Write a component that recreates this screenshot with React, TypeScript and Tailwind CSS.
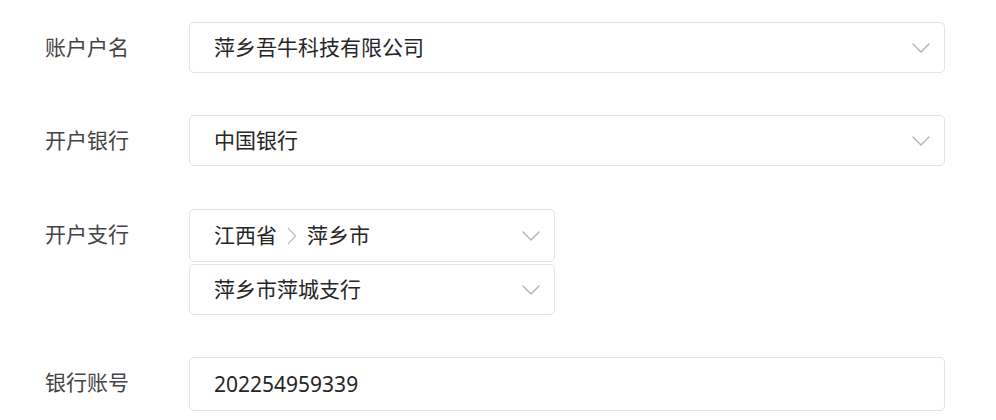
import React from "react";

const Chevron = ({ className = "" }: { className?: string }) => (
  <svg width="18" height="10" viewBox="0 0 18 10" className={className} fill="none">
    <path d="M1 1 L9 9 L17 1" stroke="#b3b3b3" strokeWidth="1.4" strokeLinecap="round" strokeLinejoin="round" />
  </svg>
);

const font = { fontFamily: '"Noto Sans", "Noto Sans CJK SC", sans-serif' };

function Box({ children, chevron = true, w = "w-[756px]", h = "h-[51px]" }: { children: React.ReactNode; chevron?: boolean; w?: string; h?: string }) {
  return (
    <div className={`${w} ${h} flex items-center justify-between border border-[#e3e3e3] rounded-[5px] bg-white pl-[24px] pr-[14px]`}>
      <div className="text-[21px] text-[#262626] leading-none">{children}</div>
      {chevron && <Chevron />}
    </div>
  );
}

function Label({ children }: { children: React.ReactNode }) {
  return (
    <div className="w-[144px] h-[51px] flex items-center text-[21px] text-[#444] leading-none shrink-0">{children}</div>
  );
}

export default function App() {
  return (
    <div className="w-[996px] h-[420px] bg-white overflow-hidden pl-[45px] pt-[22px]" style={font}>
      <div className="flex flex-col">
        <div className="flex">
          <Label>账户户名</Label>
          <Box>萍乡吾牛科技有限公司</Box>
        </div>
        <div className="flex mt-[42px]">
          <Label>开户银行</Label>
          <Box>中国银行</Box>
        </div>
        <div className="flex mt-[43px]">
          <Label>开户支行</Label>
          <div className="flex flex-col gap-[2px]">
            <Box w="w-[366px]" h="h-[53px]">
              <span className="flex items-center">
                江西省
                <svg width="10" height="18" viewBox="0 0 10 18" className="mx-[10px]" fill="none">
                  <path d="M1.5 1.5 L8.5 9 L1.5 16.5" stroke="#bdbdbd" strokeWidth="1.2" strokeLinecap="round" strokeLinejoin="round" />
                </svg>
                萍乡市
              </span>
            </Box>
            <Box w="w-[366px]">萍乡市萍城支行</Box>
          </div>
        </div>
        <div className="flex mt-[42px]">
          <Label>银行账号</Label>
          <Box chevron={false} h="h-[54px]">202254959339</Box>
        </div>
      </div>
    </div>
  );
}
